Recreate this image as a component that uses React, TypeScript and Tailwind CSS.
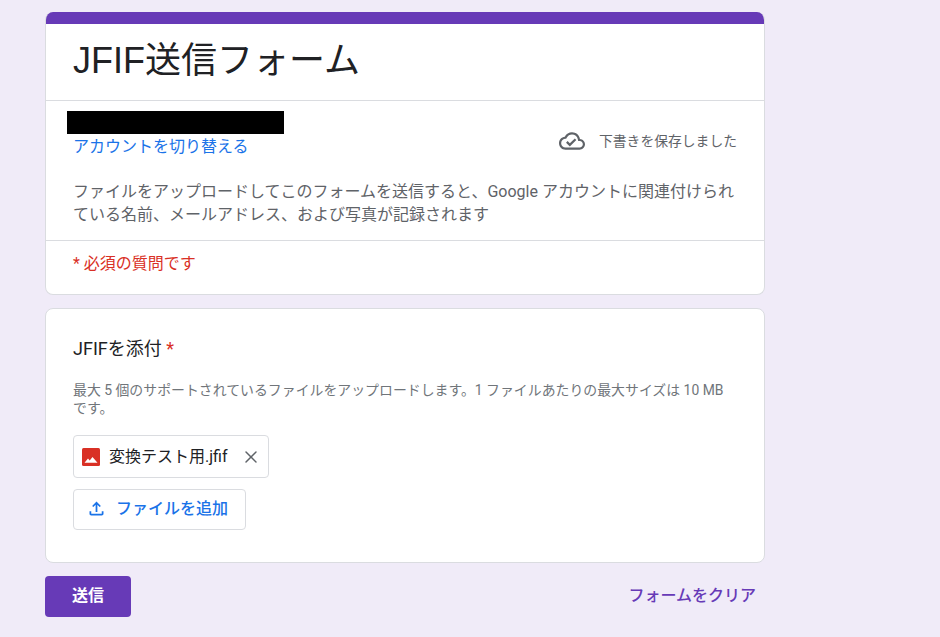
import { X } from 'lucide-react'

const sans = "font-['Roboto','Noto_Sans_CJK_JP',sans-serif]"

function CloudDoneIcon() {
  return (
    <svg width="26" height="26" viewBox="0 0 24 24" fill="#5f6368">
      <path d="M19.35 10.04C18.67 6.59 15.64 4 12 4 9.11 4 6.6 5.64 5.35 8.04 2.34 8.36 0 10.91 0 14c0 3.31 2.69 6 6 6h13c2.76 0 5-2.24 5-5 0-2.64-2.05-4.78-4.65-4.96zM19 18H6c-2.21 0-4-1.79-4-4 0-2.05 1.53-3.76 3.56-3.97l1.07-.11.5-.95C8.08 7.14 9.94 6 12 6c2.62 0 4.88 1.86 5.39 4.43l.3 1.5 1.53.11c1.56.1 2.78 1.41 2.78 2.96 0 1.65-1.35 3-3 3zm-9-3.82l-2.09-2.09L6.5 13.5 10 17l6.01-6.01-1.41-1.41z" />
    </svg>
  )
}

function ImageFileIcon() {
  return (
    <svg width="18" height="18" viewBox="0 0 18 18">
      <rect width="18" height="18" rx="1.5" fill="#d93025" />
      <path d="M2.5 14.7L6 10.5l1.7 2L10.5 9l5 5.7z" fill="#fff" />
    </svg>
  )
}

function UploadIcon() {
  return (
    <svg width="21" height="21" viewBox="0 0 24 24" fill="#1a73e8">
      <path d="M18 15v3H6v-3H4v3c0 1.1.9 2 2 2h12c1.1 0 2-.9 2-2v-3h-2zM7 9l1.41 1.41L11 7.83V16h2V7.83l2.59 2.58L17 9l-5-5-5 5z" />
    </svg>
  )
}

export default function App() {
  return (
    <div className={`${sans} min-h-[637px] h-[637px] overflow-hidden bg-[#f0ebf8] pt-3 pl-[45px]`}>
      <div className="w-[720px]">
        <div className="overflow-hidden rounded-lg border border-t-0 border-[#dadce0] bg-white">
          <div className="h-3 -mx-px bg-[#673ab7]" />
          <div className="h-[77px] border-b border-[#dadce0] pl-[27px] pt-[13px] font-['Liberation_Sans','Noto_Sans_CJK_JP',sans-serif] text-[36px] leading-[48px] text-[#202124]">
            JFIF送信フォーム
          </div>
          <div className="h-[140px] border-b border-[#dadce0]">
            <div className="flex items-start justify-between pr-[27px]">
              <div className="pl-[21px] pt-[10px]">
                <div className="h-[23px] w-[217px] bg-black" />
                <div className="ml-[6px] mt-[2px] text-base leading-[22px] text-[#1a73e8]">アカウントを切り替える</div>
              </div>
              <div className="mt-[27px] flex items-center gap-[14px] text-[13.8px] text-[#5f6368]">
                <CloudDoneIcon />
                <span>下書きを保存しました</span>
              </div>
            </div>
            <p className="mt-[22px] px-[27px] text-base leading-[23px] text-[#5f6368]">
              ファイルをアップロードしてこのフォームを送信すると、Google アカウントに関連付けられている名前、メールアドレス、および写真が記録されます
            </p>
          </div>
          <div className="h-[53px] pl-[27px] pt-[12px] text-base leading-[22px] text-[#d93025]">* 必須の質問です</div>
        </div>

        <div className="mt-[13px] h-[255px] rounded-lg border border-[#dadce0] bg-white pl-[27px] pt-[28px]">
          <div className="text-lg leading-6 text-[#202124]">
            JFIFを添付 <span className="text-[#d93025]">*</span>
          </div>
          <p className="mt-[20px] w-[660px] text-[13.9px] leading-[18px] text-[#70757a]">
            最大 5 個のサポートされているファイルをアップロードします。1 ファイルあたりの最大サイズは 10 MB です。
          </p>
          <div className="mt-[18px] flex h-[43px] w-[196px] items-center rounded border border-[#dadce0] pl-2">
            <ImageFileIcon />
            <span className="ml-[9px] text-base text-[#202124]">変換テスト用.jfif</span>
            <X className="ml-[14px] text-[#5f6368]" size={20} strokeWidth={1.75} />
          </div>
          <div className="mt-[11px] flex h-[41px] w-[173px] items-center rounded border border-[#dadce0] pl-[12px] pb-[2px] text-base font-medium text-[#1a73e8]">
            <UploadIcon />
            <span className="ml-[9px]">ファイルを追加</span>
          </div>
        </div>

        <div className="mt-[13px] flex items-center justify-between">
          <div className="flex h-[41px] w-[86px] items-center justify-center rounded bg-[#673ab7] pb-[2px] text-base font-bold text-white">
            送信
          </div>
          <div className="pr-[9px] pb-[2px] text-base font-medium text-[#673ab7]">フォームをクリア</div>
        </div>
      </div>
    </div>
  )
}
